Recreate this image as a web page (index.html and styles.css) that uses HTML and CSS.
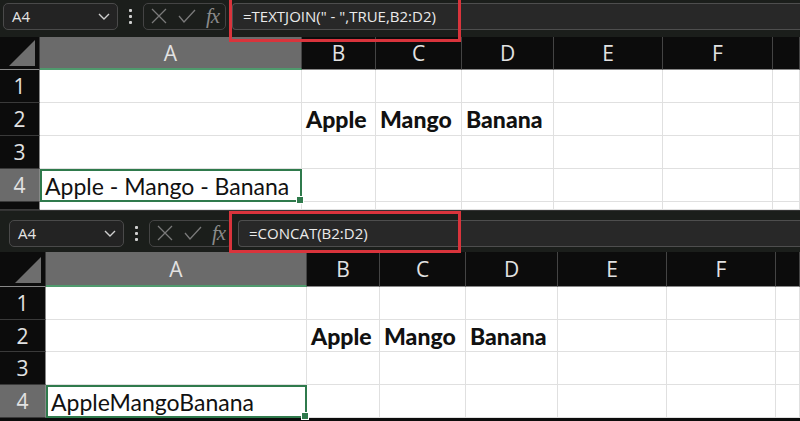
FILE: index.html
```html
<!DOCTYPE html>
<html lang="en">
<head>
  <meta charset="UTF-8">
  <title>TEXTJOIN vs CONCAT</title>
  <link rel="stylesheet" href="styles.css">
</head>
<body>
  <div class="sheet top">
    <div class="fbar">
      <div class="namebox">
        <span>A4</span>
        <svg width="14" height="14" viewBox="0 0 14 14"><path d="M2 5 L7 10 L12 5" fill="none" stroke="#cfcfcf" stroke-width="1.4"/></svg>
      </div>
      <div class="kebab"><i></i><i></i><i></i></div>
      <div class="fxbox">
        <svg width="18" height="18" viewBox="0 0 18 18"><path d="M2 2 L16 16 M16 2 L2 16" stroke="#7a7a7a" stroke-width="1.3"/></svg>
        <svg width="20" height="18" viewBox="0 0 20 18"><path d="M2 9 L7 15 L18 3" fill="none" stroke="#7a7a7a" stroke-width="1.3"/></svg>
        <span class="fx">fx</span>
      </div>
      <div class="formula">=TEXTJOIN(" - ",TRUE,B2:D2)</div>
      <div class="mark"></div>
    </div>
    <div class="grid">
      <div class="corner"><span></span></div>
      <div class="colhead sel">A</div>
      <div class="colhead">B</div>
      <div class="colhead">C</div>
      <div class="colhead">D</div>
      <div class="colhead">E</div>
      <div class="colhead">F</div>
      <div class="colhead"></div>

      <div class="rowhead">1</div>
      <div class="cell"></div><div class="cell"></div><div class="cell"></div><div class="cell"></div><div class="cell"></div><div class="cell"></div><div class="cell"></div>

      <div class="rowhead">2</div>
      <div class="cell"></div><div class="cell bold">Apple</div><div class="cell bold">Mango</div><div class="cell bold">Banana</div><div class="cell"></div><div class="cell"></div><div class="cell"></div>

      <div class="rowhead">3</div>
      <div class="cell"></div><div class="cell"></div><div class="cell"></div><div class="cell"></div><div class="cell"></div><div class="cell"></div><div class="cell"></div>

      <div class="rowhead sel">4</div>
      <div class="cell active">Apple - Mango - Banana<b class="handle"></b></div><div class="cell"></div><div class="cell"></div><div class="cell"></div><div class="cell"></div><div class="cell"></div><div class="cell"></div>

      <div class="rowhead"></div>
      <div class="cell"></div><div class="cell"></div><div class="cell"></div><div class="cell"></div><div class="cell"></div><div class="cell"></div><div class="cell"></div>
    </div>
  </div>

  <div class="sheet bottom">
    <div class="fbar">
      <div class="namebox">
        <span>A4</span>
        <svg width="14" height="14" viewBox="0 0 14 14"><path d="M2 5 L7 10 L12 5" fill="none" stroke="#cfcfcf" stroke-width="1.4"/></svg>
      </div>
      <div class="kebab"><i></i><i></i><i></i></div>
      <div class="fxbox">
        <svg width="18" height="18" viewBox="0 0 18 18"><path d="M2 2 L16 16 M16 2 L2 16" stroke="#7a7a7a" stroke-width="1.3"/></svg>
        <svg width="20" height="18" viewBox="0 0 20 18"><path d="M2 9 L7 15 L18 3" fill="none" stroke="#7a7a7a" stroke-width="1.3"/></svg>
        <span class="fx">fx</span>
      </div>
      <div class="formula">=CONCAT(B2:D2)</div>
      <div class="mark"></div>
    </div>
    <div class="grid">
      <div class="corner"><span></span></div>
      <div class="colhead sel">A</div>
      <div class="colhead">B</div>
      <div class="colhead">C</div>
      <div class="colhead">D</div>
      <div class="colhead">E</div>
      <div class="colhead">F</div>
      <div class="colhead"></div>

      <div class="rowhead">1</div>
      <div class="cell"></div><div class="cell"></div><div class="cell"></div><div class="cell"></div><div class="cell"></div><div class="cell"></div><div class="cell"></div>

      <div class="rowhead">2</div>
      <div class="cell"></div><div class="cell bold">Apple</div><div class="cell bold">Mango</div><div class="cell bold">Banana</div><div class="cell"></div><div class="cell"></div><div class="cell"></div>

      <div class="rowhead">3</div>
      <div class="cell"></div><div class="cell"></div><div class="cell"></div><div class="cell"></div><div class="cell"></div><div class="cell"></div><div class="cell"></div>

      <div class="rowhead sel">4</div>
      <div class="cell active">AppleMangoBanana<b class="handle"></b></div><div class="cell"></div><div class="cell"></div><div class="cell"></div><div class="cell"></div><div class="cell"></div><div class="cell"></div>
    </div>
  </div>
</body>
</html>
```

FILE: styles.css
```css
body {
  margin: 0;
  background: #0c0c0c;
  font-family: "Open Sans", sans-serif;
  overflow: hidden;
}
.sheet {
  position: relative;
  overflow: hidden;
}
.top {
  height: 210px;
}
.bottom {
  height: 211px;
}

/* formula bar */
.fbar {
  position: relative;
  display: flex;
  align-items: center;
  background: #1b1e1b;
  box-sizing: border-box;
}
.top .fbar {
  height: 37px;
  padding: 0 0 5px 3px;
}
.bottom .fbar {
  height: 42px;
  padding: 5px 0 2px 9px;
  border-top: 1px solid #333;
}
.namebox {
  width: 115px;
  height: 27px;
  box-sizing: border-box;
  border: 1px solid #4a4a4a;
  border-radius: 5px;
  background: #232323;
  color: #e4e4e4;
  font-size: 15px;
  display: flex;
  align-items: center;
  justify-content: space-between;
  padding: 0 6px 0 8px;
}
.kebab {
  width: 25px;
  display: flex;
  flex-direction: column;
  align-items: center;
  gap: 3px;
}
.kebab i {
  width: 3px;
  height: 3px;
  background: #d0d0d0;
  border-radius: 1px;
}
.fxbox {
  width: 83px;
  height: 27px;
  box-sizing: border-box;
  border: 1px solid #444;
  border-radius: 5px;
  display: flex;
  align-items: center;
  gap: 9px;
  padding-left: 6px;
}
.fx {
  font-family: "Liberation Serif", serif;
  font-style: italic;
  font-size: 21px;
  color: #8a8a8a;
  letter-spacing: -1px;
}
.formula {
  flex: 1;
  height: 27px;
  box-sizing: border-box;
  margin-left: 6px;
  border-top: 1px solid #4e4e4e;
  border-bottom: 1px solid #4e4e4e;
  border-left: 1px solid #4e4e4e;
  border-radius: 4px 0 0 4px;
  background: #282828;
  color: #eaeaea;
  font-size: 15px;
  line-height: 25px;
  padding-left: 10px;
}
.mark {
  position: absolute;
  left: 229px;
  width: 232px;
  border: 3px solid #d9343c;
  box-sizing: border-box;
}
.top .mark {
  top: -3px;
  height: 45px;
}
.bottom .mark {
  top: 0;
  height: 42px;
}

/* grid */
.grid {
  display: grid;
  background: #fff;
}
.top .grid {
  grid-template-columns: 40px 262px 74px 86px 92px 109px 110px 27px;
  grid-template-rows: 33px 33px 33px 33px 33px 8px;
}
.bottom .grid {
  grid-template-columns: 46px 261px 73px 86px 92px 109px 109px 24px;
  grid-template-rows: 35px 33px 32px 33px 33px;
}
.corner {
  background: #0c0c0c;
  border-right: 1px solid #3a3a3a;
  border-bottom: 1px solid #888;
  position: relative;
}
.corner span {
  position: absolute;
  right: 4px;
  bottom: 3px;
  width: 0;
  height: 0;
  border-left: 26px solid transparent;
  border-bottom: 26px solid #6e6e6e;
}
.colhead {
  background: #0c0c0c;
  color: #e2e2e2;
  font-size: 21px;
  display: flex;
  align-items: center;
  justify-content: center;
  border-right: 1px solid #444;
  border-bottom: 1px solid #888;
}
.colhead.sel {
  background: #6b6b6b;
  border-bottom: 2px solid #4f9a6d;
}
.rowhead {
  background: #0c0c0c;
  color: #e2e2e2;
  font-size: 21px;
  display: flex;
  align-items: center;
  justify-content: center;
  border-right: 1px solid #888;
  border-bottom: 1px solid #3a3a3a;
}
.rowhead.sel {
  background: #6b6b6b;
}
.cell {
  border-right: 1px solid #e0e0e0;
  border-bottom: 1px solid #e0e0e0;
  font-family: "Lato", sans-serif;
  color: #111;
  font-size: 23px;
  display: flex;
  align-items: center;
  padding-left: 4px;
  white-space: nowrap;
  overflow: visible;
}
.cell.bold {
  font-weight: 900;
  font-size: 23px;
}
.cell.active {
  position: relative;
  border: 2px solid #2f7a4c;
  padding-left: 3px;
}
.handle {
  position: absolute;
  right: -4px;
  bottom: -4px;
  width: 6px;
  height: 6px;
  background: #2f7a4c;
  border: 1px solid #fff;
}
```
